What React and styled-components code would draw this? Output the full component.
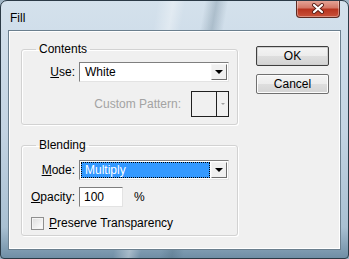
import React from "react";
import styled, { createGlobalStyle } from "styled-components";

const GlobalStyle = createGlobalStyle`
     html, body {
          margin: 0;
          padding: 0;
          background: #9fb4c4;
     }
     body {
          font-family: "Liberation Sans", Arial, sans-serif;
          font-size: 12px;
          color: #000;
     }
`;

/* the whole Aero window, glass frame around the grey client area */
const Window = styled.div`
     width: 349px;
     height: 259px;
     box-sizing: border-box;
     display: flex;
     flex-direction: column;
     border: 1px solid #2b3a46;
     border-radius: 7px 7px 4px 4px;
     background:
          linear-gradient(100deg, transparent 40%, rgba(255, 255, 255, 0.35) 44%, transparent 47%, transparent 52%, rgba(60, 90, 110, 0.25) 55%, transparent 58%),
          linear-gradient(to bottom, #d4e1ec 0%, #c3d4e3 50%, #a9c0d2 88%, #6f8ea5 100%);
     overflow: hidden;
`;

const TitleBar = styled.div`
     height: 29px;
     display: flex;
     align-items: flex-start;
     justify-content: space-between;
     padding-left: 9px;
`;

const Title = styled.div`
     padding-top: 10px;
     font-size: 12px;
     color: #000;
`;

const CloseButton = styled.div`
     width: 42px;
     height: 17px;
     margin-right: 8px;
     margin-top: -1px;
     display: flex;
     align-items: center;
     justify-content: center;
     border: 1px solid #5c2a22;
     border-top: none;
     border-radius: 0 0 4px 4px;
     background: linear-gradient(to bottom, #e7a99c 0%, #d47867 45%, #b8341f 55%, #c9523a 100%);
     box-shadow: inset 0 0 0 1px rgba(255, 255, 255, 0.35);
`;

const Client = styled.div`
     flex: 1;
     margin: 0 7px 8px 7px;
     border: 1px solid #6b7f8e;
     box-shadow: inset 0 0 0 1px #ffffff;
     background: #f0f0f0;
     display: flex;
     padding: 11px 11px 0 12px;
`;

const LeftColumn = styled.div`
     width: 218px;
     display: flex;
     flex-direction: column;
     gap: 13px;
`;

const Group = styled.fieldset`
     margin: 0;
     padding: 0 8px ${(p) => p.$bottom}px 0;
     border: 1px solid #d2d2d2;
     border-radius: 3px;
     box-shadow: 1px 1px 0 #ffffff, inset 1px 1px 0 #ffffff;
     min-width: 0;
`;

const Legend = styled.legend`
     margin-left: 14px;
     padding: 0 3px;
     line-height: 15px;
     font-size: 12px;
`;

const Row = styled.div`
     display: flex;
     align-items: center;
     margin-top: ${(p) => p.$top}px;
     justify-content: ${(p) => (p.$end ? "flex-end" : "flex-start")};
`;

const Label = styled.label`
     width: 53px;
     text-align: right;
     margin-right: 4px;
`;

const DisabledLabel = styled.span`
     color: #a3a3a3;
`;

const U = styled.span`
     text-decoration: underline;
`;

const Select = styled.div`
     width: 150px;
     height: 20px;
     box-sizing: border-box;
     display: flex;
     border: 1px solid #7f7f7f;
     border-right-color: #e3e3e3;
     border-bottom-color: #e3e3e3;
     background: #fff;
`;

const SelectValue = styled.div`
     flex: 1;
     display: flex;
     align-items: center;
     margin: 1px;
     padding-left: 4px;
     ${(p) =>
          p.$selected &&
          `
          background: #3399ff;
          color: #ffffff;
          outline: 1px dotted #000;
          outline-offset: -1px;
     `}
`;

const ArrowButton = styled.div`
     width: 16px;
     box-sizing: border-box;
     display: flex;
     align-items: center;
     justify-content: center;
     margin: 1px 1px 1px 0;
     background: #f0f0f0;
     border: 1px solid;
     border-color: #f6f6f6 #6d6d6d #6d6d6d #f6f6f6;
     color: #000;
`;

const Arrow = styled.span`
     width: 0;
     height: 0;
     border-left: ${(p) => (p.$small ? 2 : 4)}px solid transparent;
     border-right: ${(p) => (p.$small ? 2 : 4)}px solid transparent;
     border-top: ${(p) => (p.$small ? 2 : 4)}px solid currentColor;
`;

const PatternBox = styled.div`
     width: 38px;
     height: 26px;
     box-sizing: border-box;
     margin-left: 10px;
     display: flex;
     border: 1px solid #202020;
     background: #f0f0f0;
`;

const PatternSwatch = styled.div`
     flex: 1;
     border-right: 1px solid #202020;
`;

const PatternArrow = styled.div`
     width: 11px;
     display: flex;
     align-items: center;
     justify-content: center;
     color: #a0a0a0;
`;

const TextInput = styled.div`
     width: 44px;
     height: 20px;
     box-sizing: border-box;
     border: 1px solid #7f7f7f;
     border-right-color: #e3e3e3;
     border-bottom-color: #e3e3e3;
     background: #fff;
     display: flex;
     align-items: center;
     padding-left: 4px;
`;

const Unit = styled.span`
     margin-left: 11px;
`;

const CheckRow = styled.div`
     display: flex;
     align-items: center;
     margin-top: 9px;
     padding-left: 9px;
`;

const CheckBox = styled.span`
     width: 13px;
     height: 13px;
     box-sizing: border-box;
     border: 1px solid #8f8f8f;
     background: linear-gradient(135deg, #dcdcdc, #ffffff);
     box-shadow: inset 0 0 0 1px #f4f4f4;
     margin-right: 5px;
`;

const RightColumn = styled.div`
     margin-left: 18px;
     padding-top: 4px;
     display: flex;
     flex-direction: column;
     gap: 8px;
`;

const Button = styled.div`
     width: 73px;
     height: 20px;
     box-sizing: border-box;
     display: flex;
     align-items: center;
     justify-content: center;
     border: 1px solid ${(p) => (p.$default ? "#3f3f3f" : "#707070")};
     border-radius: 2px;
     background: linear-gradient(to bottom, #f4f4f4 0%, #ececec 50%, #dedede 51%, #d4d4d4 100%);
     box-shadow: inset 0 0 0 1px ${(p) => (p.$default ? "#cfcfcf" : "#fcfcfc")};
`;

function CloseGlyph() {
     return (
          <svg width="14" height="11" viewBox="0 0 14 11">
               <path d="M3 2 L11 9 M11 2 L3 9" stroke="#5a2018" strokeWidth="4" strokeLinecap="round" />
               <path d="M3 2 L11 9 M11 2 L3 9" stroke="#ffffff" strokeWidth="2.2" strokeLinecap="round" />
          </svg>
     );
}

export default function App() {
     return (
          <>
               <GlobalStyle />
               <Window>
                    <TitleBar>
                         <Title>Fill</Title>
                         <CloseButton>
                              <CloseGlyph />
                         </CloseButton>
                    </TitleBar>
                    <Client>
                         <LeftColumn>
                              <Group $bottom={7}>
                                   <Legend>Contents</Legend>
                                   <Row $top={5}>
                                        <Label>
                                             <U>U</U>se:
                                        </Label>
                                        <Select>
                                             <SelectValue>White</SelectValue>
                                             <ArrowButton>
                                                  <Arrow />
                                             </ArrowButton>
                                        </Select>
                                   </Row>
                                   <Row $top={9} $end>
                                        <DisabledLabel>Custom Pattern:</DisabledLabel>
                                        <PatternBox>
                                             <PatternSwatch />
                                             <PatternArrow>
                                                  <Arrow $small />
                                             </PatternArrow>
                                        </PatternBox>
                                   </Row>
                              </Group>
                              <Group $bottom={5}>
                                   <Legend>Blending</Legend>
                                   <Row $top={7}>
                                        <Label>
                                             <U>M</U>ode:
                                        </Label>
                                        <Select>
                                             <SelectValue $selected>Multiply</SelectValue>
                                             <ArrowButton>
                                                  <Arrow />
                                             </ArrowButton>
                                        </Select>
                                   </Row>
                                   <Row $top={7}>
                                        <Label>
                                             <U>O</U>pacity:
                                        </Label>
                                        <TextInput>100</TextInput>
                                        <Unit>%</Unit>
                                   </Row>
                                   <CheckRow>
                                        <CheckBox />
                                        <span>
                                             <U>P</U>reserve Transparency
                                        </span>
                                   </CheckRow>
                              </Group>
                         </LeftColumn>
                         <RightColumn>
                              <Button $default>OK</Button>
                              <Button>Cancel</Button>
                         </RightColumn>
                    </Client>
               </Window>
          </>
     );
}
